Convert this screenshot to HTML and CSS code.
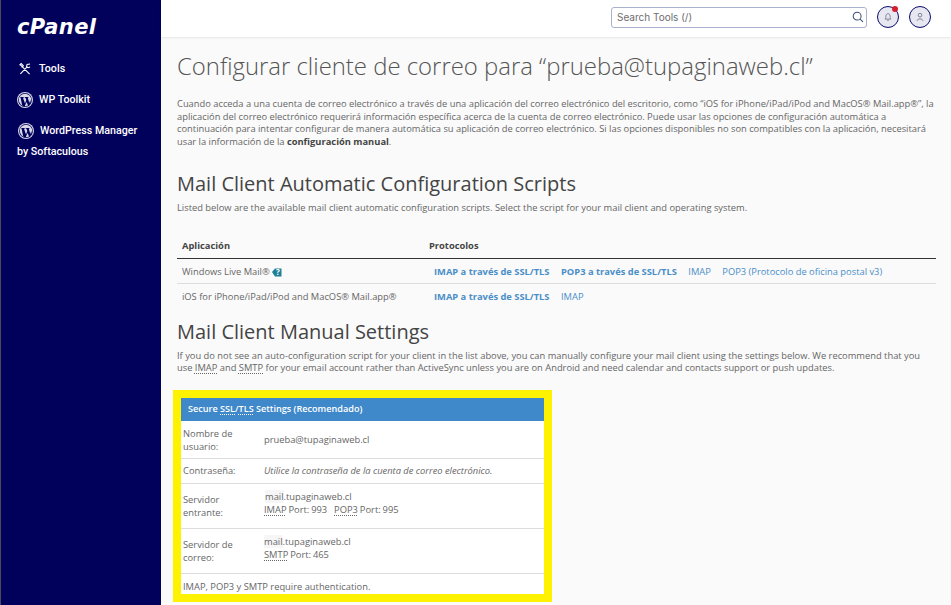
FILE: index.html
```html
<!DOCTYPE html>
<html lang="es">
<head>
<meta charset="utf-8">
<title>Configurar cliente de correo</title>
<link rel="stylesheet" href="styles.css">
</head>
<body>
<aside class="sidebar">
  <div class="logo">cPanel</div>
  <nav class="nav">
    <a class="nav-item"><svg class="nav-icon" viewBox="-1.5 -1.5 19 19"><path d="M2 2.5 L13.5 14 M14 2 L10.5 2.5 L9.8 5 L11.5 6.5 L14 5.5 M10.5 5.5 L2.5 13.8 M1.5 3.5 L3.5 1.5 L6 4 L4 6" fill="none" stroke="#fff" stroke-width="1.3"/></svg><span>Tools</span></a>
    <a class="nav-item"><svg class="nav-icon wp" viewBox="0 0 16 16"><circle cx="8" cy="8" r="8" fill="#d8d8e6"/><circle cx="8" cy="8" r="6.9" fill="#01015c"/><circle cx="8" cy="8" r="6.2" fill="#d8d8e6"/><path d="M3 5 H7 V5.6 L6 5.8 L8 11.5 L9.3 8 L8.4 5.8 L7.6 5.6 V5 H11.6 V5.6 L10.8 5.8 L12.3 11 L13.2 8 L13.8 10.5 L11.6 14.5 L9.5 10 L7.5 14.8 L5.2 13.5 L3.6 5.8 Z" fill="#01015c"/></svg><span>WP Toolkit</span></a>
    <a class="nav-item nav-wrap"><svg class="nav-icon wp" viewBox="0 0 16 16"><circle cx="8" cy="8" r="8" fill="#d8d8e6"/><circle cx="8" cy="8" r="6.9" fill="#01015c"/><circle cx="8" cy="8" r="6.2" fill="#d8d8e6"/><path d="M3 5 H7 V5.6 L6 5.8 L8 11.5 L9.3 8 L8.4 5.8 L7.6 5.6 V5 H11.6 V5.6 L10.8 5.8 L12.3 11 L13.2 8 L13.8 10.5 L11.6 14.5 L9.5 10 L7.5 14.8 L5.2 13.5 L3.6 5.8 Z" fill="#01015c"/></svg><span class="nav-label">WordPress Manager</span><span class="nav-sub">by Softaculous</span></a>
  </nav>
</aside>
<div class="main">
  <header class="topbar">
    <div class="search">
      <span>Search Tools (/)</span>
      <svg class="search-icon" viewBox="0 0 14 14"><circle cx="6" cy="6" r="4.6" fill="none" stroke="#3d4f7c" stroke-width="1.2"/><path d="M9.4 9.4 L12.8 12.8" stroke="#3d4f7c" stroke-width="1.2"/></svg>
    </div>
    <div class="round bell">
      <svg viewBox="0 0 12 12" class="round-icon"><path d="M2.5 8.5 C3.5 7.5 3.3 6 3.5 4.5 C3.8 2.8 5 2 6 2 C7 2 8.2 2.8 8.5 4.5 C8.7 6 8.5 7.5 9.5 8.5 Z M5 10 H7" fill="none" stroke="#6b6f85" stroke-width="1"/></svg>
      <i class="dot"></i>
    </div>
    <div class="round">
      <svg viewBox="0 0 12 12" class="round-icon"><circle cx="6" cy="3.8" r="2.2" fill="none" stroke="#6b6f85" stroke-width="1"/><path d="M2.5 10.5 C3 7.5 9 7.5 9.5 10.5" fill="none" stroke="#6b6f85" stroke-width="1"/></svg>
    </div>
  </header>
  <main class="content">
    <h1>Configurar cliente de correo para “prueba@tupaginaweb.cl”</h1>
    <p class="intro">Cuando acceda a una cuenta de correo electrónico a través de una aplicación del correo electrónico del escritorio, como “iOS for iPhone/iPad/iPod and MacOS® Mail.app®”, la aplicación del correo electrónico requerirá información específica acerca de la cuenta de correo electrónico. Puede usar las opciones de configuración automática a continuación para intentar configurar de manera automática su aplicación de correo electrónico. Si las opciones disponibles no son compatibles con la aplicación, necesitará usar la información de la <b>configuración manual</b>.</p>
    <h2 class="auto-title">Mail Client Automatic Configuration Scripts</h2>
    <p class="lead">Listed below are the available mail client automatic configuration scripts. Select the script for your mail client and operating system.</p>
    <table class="apps">
      <thead><tr><th class="col-app">Aplicación</th><th>Protocolos</th></tr></thead>
      <tbody>
        <tr><td>Windows Live Mail® <svg class="help" viewBox="0 0 10 10"><path d="M0 5 L3 1.5 H9.5 V9.5 H3 Z" fill="#1f7f96"/><text x="4" y="8" class="help-q">?</text></svg></td>
          <td class="links"><a class="b">IMAP a través de SSL/TLS</a><a class="b">POP3 a través de SSL/TLS</a><a>IMAP</a><a>POP3 (Protocolo de oficina postal v3)</a></td></tr>
        <tr><td>iOS for iPhone/iPad/iPod and MacOS® Mail.app®</td>
          <td class="links"><a class="b">IMAP a través de SSL/TLS</a><a>IMAP</a></td></tr>
      </tbody>
    </table>
    <h2 class="manual-title">Mail Client Manual Settings</h2>
    <p class="lead manual-lead">If you do not see an auto-configuration script for your client in the list above, you can manually configure your mail client using the settings below. We recommend that you use <abbr>IMAP</abbr> and <abbr>SMTP</abbr> for your email account rather than ActiveSync unless you are on Android and need calendar and contacts support or push updates.</p>
    <section class="settings">
      <div class="settings-head">Secure <abbr>SSL</abbr>/<abbr>TLS</abbr> Settings (Recomendado)</div>
      <div class="row r1"><div class="label">Nombre de usuario:</div><div class="val">prueba@tupaginaweb.cl</div></div>
      <div class="row r2"><div class="label">Contraseña:</div><div class="val"><em>Utilice la contraseña de la cuenta de correo electrónico.</em></div></div>
      <div class="row r3"><div class="label">Servidor entrante:</div><div class="val lifted"><span class="host"><span class="hl">mail</span>.tupaginaweb.cl</span><br><abbr>IMAP</abbr> Port: 993 <span class="gap"></span><abbr>POP3</abbr> Port: 995</div></div>
      <div class="row r3"><div class="label">Servidor de correo:</div><div class="val lifted"><span class="hl">mail</span>.tupaginaweb.cl<br><abbr>SMTP</abbr> Port: 465</div></div>
      <div class="note">IMAP, POP3 y SMTP require authentication.</div>
    </section>
  </main>
</div>
</body>
</html>
```
FILE: styles.css
```css
* { box-sizing: border-box; }
html, body { margin: 0; height: 605px; overflow: hidden; }
body { display: flex; font-family: "Open Sans", sans-serif; color: #666; background: #fafafa; }

.sidebar { width: 161px; flex: none; background: #01015c; color: #fff; font-family: Roboto, sans-serif; font-size: 10.7px; font-weight: 500; border-left: 1px solid #4a4a5a; padding: 0 0 0 16px; }
.logo { font-family: "DejaVu Sans", sans-serif; font-weight: 700; font-style: italic; font-size: 21px; letter-spacing: 0.4px; line-height: 24px; margin-top: 15px; height: 24px; }
.nav { margin-top: 14px; display: flex; flex-direction: column; }
.nav-item { display: flex; align-items: center; flex-wrap: wrap; height: 31px; color: #fff; }
.nav-icon { width: 16px; height: 16px; margin-right: 6px; }
.nav-wrap { height: auto; }
.nav-label { white-space: nowrap; line-height: 31px; }
.nav-wrap .nav-icon { margin-left: 1px; }
.nav-sub { flex-basis: 100%; line-height: 12px; }

.main { flex: 1; min-width: 0; }
.topbar { height: 37px; background: #fff; box-shadow: 0 1px 2px rgba(0,0,0,.08); display: flex; align-items: center; padding: 0 20px 0 450px; }
.search { width: 256px; height: 21px; border: 1px solid #a9b1cc; border-radius: 3px; font-size: 10px; font-family: Inter, sans-serif; color: #6d6d6d; display: flex; align-items: center; justify-content: space-between; padding: 0 2px 0 5px; margin-top: -3px; }
.search-icon { width: 12px; height: 12px; }
.round { width: 22px; height: 22px; border-radius: 50%; border: 1px solid #0a0a6a; background: #e6e7f0; display: flex; align-items: center; justify-content: center; position: relative; margin-left: 10px; margin-top: -3px; }
.round-icon { width: 10px; height: 10px; }
.dot { position: absolute; width: 6px; height: 6px; border-radius: 50%; background: #d3202f; top: -1px; right: 0; }

.content { padding: 0 15px 0 16px; }
h1 { font-weight: 300; font-size: 23.9px; line-height: 32px; margin: 13px 0 0; color: #555; }
h2 { font-weight: 400; font-size: 20px; line-height: 26px; margin: 0; color: #444; }
.intro { font-size: 9.33px; line-height: 12.5px; margin: 16px 0 0; color: #666; }
.intro b { color: #444; }
.auto-title { margin-top: 23px; }
.lead { font-size: 9.33px; line-height: 12.5px; margin: 5px 0 0; color: #666; }

.apps { width: 100%; border-collapse: collapse; margin-top: 19px; font-size: 9.33px; }
.apps th { text-align: left; font-weight: 700; color: #444; padding: 0 0 0 5px; height: 25px; border-bottom: 1px solid #333; }
.apps td { height: 25px; padding: 0 0 0 5px; border-bottom: 1px solid #ddd; color: #666; }
.apps tbody tr:last-child td { border-bottom: 0; }
.col-app { width: 247px; }
.links a { color: #4a8ec8; margin-left: 5px; margin-right: 6.5px; }
.links a.b { font-weight: 700; }
.help { width: 10px; height: 10px; vertical-align: -2px; }
.help-q { font-size: 8px; font-weight: 700; fill: #fff; font-family: "Open Sans", sans-serif; }

.manual-title { margin-top: 10px; }
.manual-lead { margin-top: 5px; }
abbr { text-decoration: underline dotted; text-underline-offset: 2px; }

.settings { width: 379px; height: 212px; border: 8px solid #fff200; background: #fff; margin: 15px 0 0 -4px; font-size: 9.33px; overflow: hidden; }
.settings-head { height: 23px; line-height: 22px; background: #3f89cb; color: #fff; font-weight: 600; padding-left: 7px; font-size: 9.1px; }
.row { display: flex; align-items: center; border-bottom: 1px solid #ddd; line-height: 13px; padding-left: 2px; }
.r1 { height: 38px; padding-top: 1px; }
.r2 { height: 25px; }
.r3 { height: 45px; }
.label { width: 81px; flex: none; padding-right: 20px; }
.val { color: #666; }
.lifted { padding-bottom: 5px; word-spacing: -0.5px; }
.host { margin-left: 1px; }
.hl { background: #f6f6f6; }
.gap { display: inline-block; width: 5px; }
.note { line-height: 25px; padding-left: 2px; }
```
